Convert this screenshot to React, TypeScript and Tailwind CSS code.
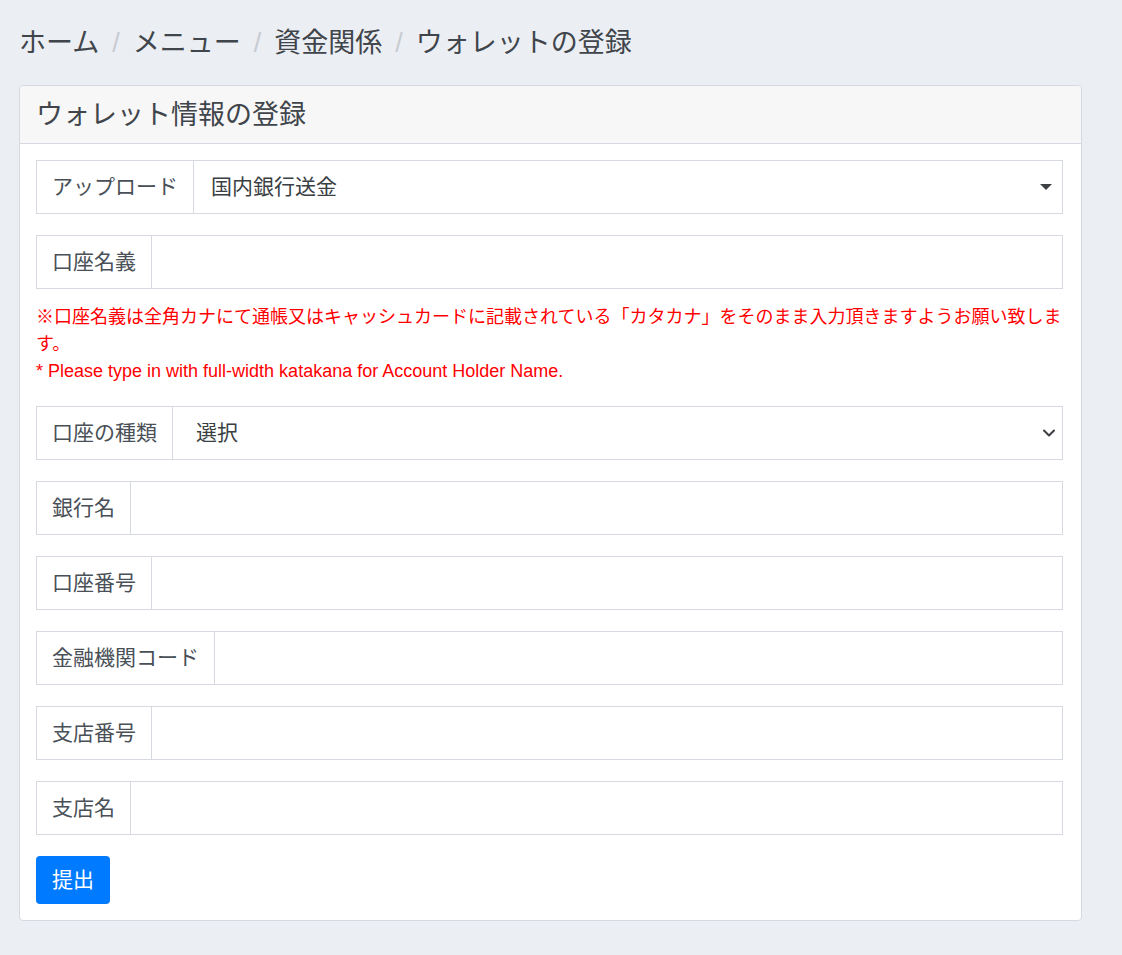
import { ChevronDown } from 'lucide-react';

const fields = [
  { label: '銀行名' },
  { label: '口座番号' },
  { label: '金融機関コード' },
  { label: '支店番号' },
  { label: '支店名' },
];

const Label = ({ children }: { children: string }) => (
  <span className="flex h-full shrink-0 items-center border-r border-[#d6d9e0] px-[15px] text-[21px] text-[#495057]">
    {children}
  </span>
);

export default function App() {
  return (
    <main
      className="min-h-[955px] bg-[#ebeef3] pl-[19px] pt-[23px] pb-[34px]"
      style={{ fontFamily: '"Liberation Sans", "Noto Sans CJK JP", sans-serif' }}
    >
      <nav className="flex h-[40px] items-center text-[27px] text-[#40454b]">
        <span>ホーム</span>
        <span className="px-[13px] text-[#c8ccd2]">/</span>
        <span>メニュー</span>
        <span className="px-[13px] text-[#c8ccd2]">/</span>
        <span>資金関係</span>
        <span className="px-[13px] text-[#c8ccd2]">/</span>
        <span>ウォレットの登録</span>
      </nav>

      <section className="mt-[22px] w-[1063px] overflow-hidden rounded-[4px] border border-[#d6d9e0] bg-white">
        <header className="flex h-[58px] items-center border-b border-[#d6d9e0] bg-[#f7f7f7] px-[16px] pt-[2px] text-[27px] text-[#40454b]">
          ウォレット情報の登録
        </header>

        <div className="pt-[16px] pb-[16px] pl-[16px] pr-[18px]">
          <div className="flex h-[54px] items-center border border-[#d6d9e0]">
            <Label>アップロード</Label>
            <span className="flex-1 px-[17px] text-[21px] text-[#3a3f44]">国内銀行送金</span>
            <svg width="12" height="7" viewBox="0 0 12 7" className="mr-[10px]">
              <path d="M0 0h12L6 6z" fill="#3d4045" />
            </svg>
          </div>

          <div className="mt-[21px] flex h-[54px] items-center border border-[#d6d9e0]">
            <Label>口座名義</Label>
          </div>

          <p className="mt-[15px] text-[18px] leading-[27px] text-[#ff0000]">
            ※口座名義は全角カナにて通帳又はキャッシュカードに記載されている「カタカナ」をそのまま入力頂きますようお願い致します。
            <br />* Please type in with full-width katakana for Account Holder Name.
          </p>

          <div className="mt-[21px] flex h-[54px] items-center border border-[#d6d9e0]">
            <Label>口座の種類</Label>
            <span className="flex-1 px-[23px] text-[21px] text-[#3a3f44]">選択</span>
            <ChevronDown className="mr-[3px] h-[20px] w-[20px] text-[#3d4045]" strokeWidth={2.5} />
          </div>

          {fields.map((f) => (
            <div key={f.label} className="mt-[21px] flex h-[54px] items-center border border-[#d6d9e0]">
              <Label>{f.label}</Label>
            </div>
          ))}

          <button
            type="button"
            className="mt-[21px] h-[48px] rounded-[4px] bg-[#007bff] px-[16px] text-[21px] text-white"
          >
            提出
          </button>
        </div>
      </section>
    </main>
  );
}
